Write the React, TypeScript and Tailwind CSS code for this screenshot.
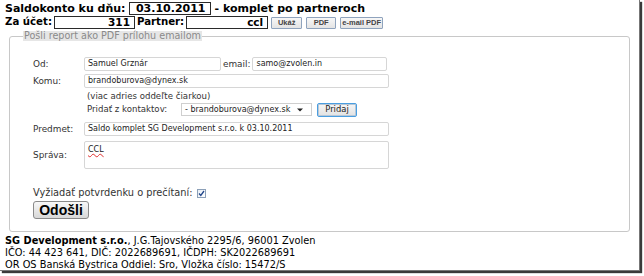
import React from "react";

const verdana = "font-['DejaVu_Sans',Verdana,sans-serif]";

function HeaderBox({ value, width, size }: { value: string; width: string; size: string }) {
  return (
    <div
      className={`${width} ${size} h-[13px] border border-[#2a2a2a] flex items-center justify-end pr-[4px] font-bold leading-none text-black`}
    >
      {value}
    </div>
  );
}

function SmallButton({ label, width }: { label: string; width: string }) {
  return (
    <button
      className={`${width} h-[12px] border border-[#8fa3bd] bg-gradient-to-b from-[#f7f7f7] to-[#e4e4e4] rounded-[1px] font-['Liberation_Sans',Arial,sans-serif] text-[7.5px] leading-none text-[#444] flex items-center justify-center`}
    >
      {label}
    </button>
  );
}

function TextInput({ value, width }: { value: string; width: string }) {
  return (
    <div
      className={`${width} h-[14px] border border-[#d6d6d6] rounded-[2px] bg-white flex items-center pl-[3px] text-[8px] leading-none text-[#222]`}
    >
      {value}
    </div>
  );
}

function Label({ children }: { children: React.ReactNode }) {
  return <div className="w-[51px] shrink-0 text-[8.9px] leading-none text-[#333]">{children}</div>;
}

export default function App() {
  return (
    <div className="w-[644px] h-[276px] bg-white">
      <div
        className={`w-[640px] h-[271px] bg-white border-r border-b border-[#777] shadow-[2px_2px_1px_#3a3a3a] ${verdana}`}
      >
        {/* Header */}
        <div className="pl-[5px] pt-[2px]">
          <div className="flex items-center h-[13px] font-bold text-[11px] leading-none text-black">
            <span>Saldokonto ku dňu:</span>
            <div className="ml-[3px]">
              <HeaderBox value="03.10.2011" width="w-[82px]" size="text-[11px]" />
            </div>
            <span className="ml-[4px]">- komplet po partneroch</span>
          </div>
          <div className="flex items-center h-[13px] mt-[1px] font-bold text-[10.2px] leading-none text-black">
            <span>Za účet:</span>
            <div className="ml-[2px]">
              <HeaderBox value="311" width="w-[81px]" size="text-[10.5px]" />
            </div>
            <span className="ml-[2px]">Partner:</span>
            <div className="ml-[2px]">
              <HeaderBox value="ccl" width="w-[82px]" size="text-[10.5px]" />
            </div>
            <div className="ml-[3px] flex gap-[4px]">
              <SmallButton label="Ukáž" width="w-[31px]" />
              <SmallButton label="PDF" width="w-[30px]" />
              <SmallButton label="e-mail PDF" width="w-[43px]" />
            </div>
          </div>
        </div>

        {/* Fieldset */}
        <fieldset className="ml-[9px] mr-[9px] mt-[2px] border border-[#c8c8c8] rounded-[3px] pl-[13px] pb-[12px]">
          <legend className="h-[10px] px-[1px] bg-[#e6e6e6] text-[#8a8a8a] text-[9.6px] leading-[10px]">
            Pošli report ako PDF prílohu emailom
          </legend>
          <div className="pl-[10px] pt-[16px]">
            <div className="flex items-center">
              <Label>Od:</Label>
              <TextInput value="Samuel Grznár" width="w-[137px]" />
              <span className="ml-[2px] mr-[2px] text-[8.9px] leading-none text-[#333]">email:</span>
              <TextInput value="samo@zvolen.in" width="w-[135px]" />
            </div>
            <div className="flex items-center mt-[3px]">
              <Label>Komu:</Label>
              <TextInput value="brandoburova@dynex.sk" width="w-[305px]" />
            </div>
            <div className="pl-[54px] mt-[3px] text-[8.6px] leading-[10px] text-[#333]">
              (viac adries oddeľte čiarkou)
            </div>
            <div className="pl-[54px] flex items-center h-[15px] mt-[1px]">
              <span className="w-[94px] text-[8.6px] leading-none text-[#333]">Pridať z kontaktov:</span>
              <div className="w-[131px] h-[13px] border border-[#cfcfcf] bg-white flex items-center pl-[3px] pr-[8px] text-[8px] leading-none text-[#222]">
                <span className="flex-1">- brandoburova@dynex.sk</span>
                <svg width="6" height="4" viewBox="0 0 6 4">
                  <path d="M0 0.5 L6 0.5 L3 3.5 Z" fill="#222" />
                </svg>
              </div>
              <button className="ml-[5px] w-[40px] h-[14px] border border-[#4a9ee0] rounded-[2px] bg-gradient-to-b from-[#f6f6f6] to-[#e2e2e2] shadow-[inset_0_0_0_1px_#b8c8d8] text-[8.4px] leading-none text-[#222] flex items-center justify-center">
                Pridaj
              </button>
            </div>
            <div className="flex items-center mt-[5px]">
              <Label>Predmet:</Label>
              <TextInput value="Saldo komplet SG Development s.r.o. k 03.10.2011" width="w-[305px]" />
            </div>
            <div className="flex items-center mt-[5px]">
              <Label>Správa:</Label>
              <div className="w-[305px] h-[28px] border border-[#d6d6d6] rounded-[2px] bg-white pl-[3px] pt-[4px] text-[8px] leading-none text-[#222]">
                <span className="underline decoration-wavy decoration-[#e03030] underline-offset-[1px]">CCL</span>
              </div>
            </div>
            <div className="flex items-center mt-[19px] h-[10px]">
              <span className="text-[9.8px] leading-none text-[#333]">Vyžiadať potvrdenku o prečítaní:</span>
              <span className="ml-[4px] w-[9px] h-[9px] border border-[#8ca0b8] bg-gradient-to-br from-[#e8eef5] to-white flex items-center justify-center">
                <svg width="7" height="7" viewBox="0 0 7 7">
                  <path d="M1 3.5 L2.8 5.5 L6 1" stroke="#21468b" strokeWidth="1.3" fill="none" />
                </svg>
              </span>
            </div>
            <button className="mt-[3px] w-[56px] h-[18px] border border-[#8a8a8a] rounded-[3px] bg-gradient-to-b from-[#f8f8f8] to-[#d8d8d8] font-['Liberation_Sans',Arial,sans-serif] font-bold text-[14px] leading-none text-black flex items-center justify-center">
              Odošli
            </button>
          </div>
        </fieldset>

        {/* Footer */}
        <div className="pl-[5px] mt-[3px] text-[9.8px] leading-[12px] text-black">
          <div>
            <span className="font-bold">SG Development s.r.o.</span>, J.G.Tajovského 2295/6, 96001 Zvolen
          </div>
          <div>IČO: 44 423 641, DIČ: 2022689691, IČDPH: SK2022689691</div>
          <div>OR OS Banská Bystrica Oddiel: Sro, Vložka číslo: 15472/S</div>
        </div>
      </div>
    </div>
  );
}
